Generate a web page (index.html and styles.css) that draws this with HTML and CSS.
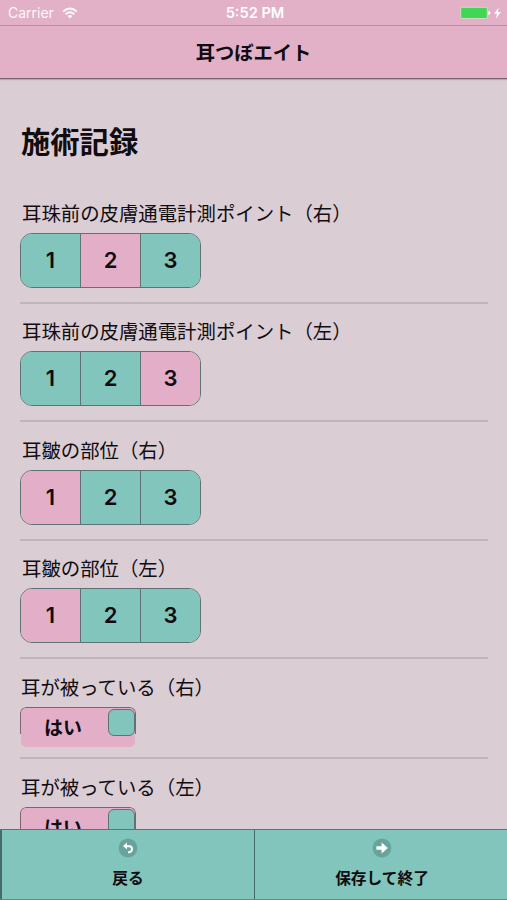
FILE: index.html
```html
<!DOCTYPE html>
<html lang="ja">
<head>
<meta charset="utf-8">
<title>耳つぼエイト</title>
<link rel="stylesheet" href="styles.css">
</head>
<body>
<div class="app">
  <div class="status">
    <div class="carrier">Carrier
      <svg class="wifi" width="16" height="12" viewBox="0 0 16 12" fill="none" stroke="#fff" stroke-width="1.9"><path d="M1.1 4.6Q8-1.7 14.9 4.6M3.6 7.2Q8 3.2 12.4 7.2"/><path d="M5.6 9Q8 7 10.4 9L8 11.4Z" fill="#fff" stroke="none"/></svg>
    </div>
    <div class="time">5:52 PM</div>
    <div class="power">
      <svg width="42" height="14" viewBox="0 0 42 14"><rect x=".7" y="1.3" width="26.6" height="11.2" rx="1.5" fill="#42d655" stroke="#d4dfc6" stroke-width=".9"/><path d="M28.4 5q2 .3 2 2t-2 2z" fill="#fff"/><path d="M38.6 1.6L34.2 7.8H37L35.9 12.4L41 6.1H37.9Z" fill="#fff"/></svg>
    </div>
  </div>
  <header class="bar"><h1>耳つぼエイト</h1></header>
  <main class="content">
    <h2>施術記録</h2>
    <section class="field">
      <div class="label">耳珠前の皮膚通電計測ポイント（右）</div>
      <div class="segments"><span>1</span><span class="on">2</span><span>3</span></div>
    </section>
    <section class="field">
      <div class="label">耳珠前の皮膚通電計測ポイント（左）</div>
      <div class="segments"><span>1</span><span>2</span><span class="on">3</span></div>
    </section>
    <section class="field">
      <div class="label">耳皺の部位（右）</div>
      <div class="segments"><span class="on">1</span><span>2</span><span>3</span></div>
    </section>
    <section class="field">
      <div class="label">耳皺の部位（左）</div>
      <div class="segments"><span class="on">1</span><span>2</span><span>3</span></div>
    </section>
    <section class="field flip">
      <div class="label">耳が被っている（右）</div>
      <div class="switch"><div class="track"></div><b>はい</b><i class="knob"></i></div>
    </section>
    <section class="field flip">
      <div class="label">耳が被っている（左）</div>
      <div class="switch"><div class="track"></div><b>はい</b><i class="knob"></i></div>
    </section>
  </main>
  <footer class="tabs">
    <div class="tab">
      <svg width="20" height="20" viewBox="0 0 20 20"><circle cx="10" cy="10" r="9.4" fill="#68a49c"/><path d="M7.6 8.2H11.4Q14 8.4 14 11T11.2 14.2H10" fill="none" stroke="#fff" stroke-width="2"/><path d="M5 8L9 4.6V11.4Z" fill="#fff"/></svg>
      <span>戻る</span>
    </div>
    <div class="tab">
      <svg width="20" height="20" viewBox="0 0 20 20"><circle cx="10" cy="10" r="9.4" fill="#68a49c"/><path d="M4.4 8.2H9.6V4.5L15.8 10L9.6 15.5V11.8H4.4Z" fill="#fff"/></svg>
      <span>保存して終了</span>
    </div>
  </footer>
</div>
</body>
</html>
```
FILE: styles.css
```css
* { box-sizing: border-box; }
body { margin: 0; font-family: "Noto Sans CJK JP", sans-serif; color: #100c10; }
.app { height: 900px; display: flex; flex-direction: column; overflow: hidden; background: #dbcdd4; }
.status { flex: none; height: 26px; display: grid; grid-template-columns: 1fr auto 1fr; align-items: center; padding: 1px 5px 0 8px; background: #e2b1c7; border-bottom: 1px solid #b88fa2; color: #fff; font: 14px/24px Inter, sans-serif; }
.carrier { display: flex; align-items: center; gap: 8px; opacity: .93; }
.time { font-weight: 600; font-size: 14.6px; }
.power { display: flex; justify-content: flex-end; }
.bar { flex: none; height: 53px; background: #e2b1c7; border-bottom: 1px solid #7d606f; text-align: center; box-shadow: 0 1px 1px #b8a7af; }
h1 { margin: 0; font-size: 19.3px; line-height: 53px; font-weight: 700; }
.content { flex: 1; min-height: 0; overflow: hidden; padding: 38px 19px 0 20px; }
h2 { margin: 0 0 22px; padding-left: 1px; font-size: 29.3px; line-height: 46px; font-weight: 700; }
.field { height: 118.6px; padding-top: 13.5px; border-bottom: 2px solid #c2b4bb; }
.label { font-size: 19.4px; line-height: 28px; padding-left: 2px; white-space: nowrap; font-feature-settings: "palt" 0; }
.segments { display: flex; width: 181px; height: 55px; margin-top: 6px; border: 1.5px solid #5f7375; border-radius: 12px; overflow: hidden; }
.segments span { flex: 1; background: #82c5bd; font: 600 22px/52px Inter, sans-serif; text-align: center; }
.segments span + span { border-left: 1px solid #5f7375; }
.segments .on { background: #e3afc8; }
.flip { height: 100px; }
.flip .label { padding-left: 1px; }
.switch { position: relative; width: 116px; height: 41px; margin-top: 6px; padding: 1px; border-radius: 6px; overflow: hidden; }
.switch::before { content: ""; position: absolute; inset: 0 0 14px; border: 1.5px solid #80636f; border-bottom: 0; border-radius: 6px 6px 0 0; }
.track { height: 100%; background: #e3afc8; border-radius: 5px; }
.switch b { position: absolute; left: 24px; top: 6px; font-size: 19px; line-height: 28px; }
.knob { position: absolute; right: 1px; top: 2px; width: 27px; height: 27px; background: #82c5bd; border: 1.5px solid #5f7375; border-radius: 6px; }
.tabs { flex: none; height: 71px; display: flex; background: #82c5bd; border-top: 1px solid #5f7375; border-bottom: 1px solid #6c8589; }
.tab { flex: none; width: 254px; display: flex; flex-direction: column; align-items: center; padding-top: 8px; border-left: 2px solid #456b6d; }
.tab + .tab { width: 255px; border-left-width: 1px; }
.tab span { margin-top: 8px; font-size: 15.7px; line-height: 24px; font-weight: 700; }
```
